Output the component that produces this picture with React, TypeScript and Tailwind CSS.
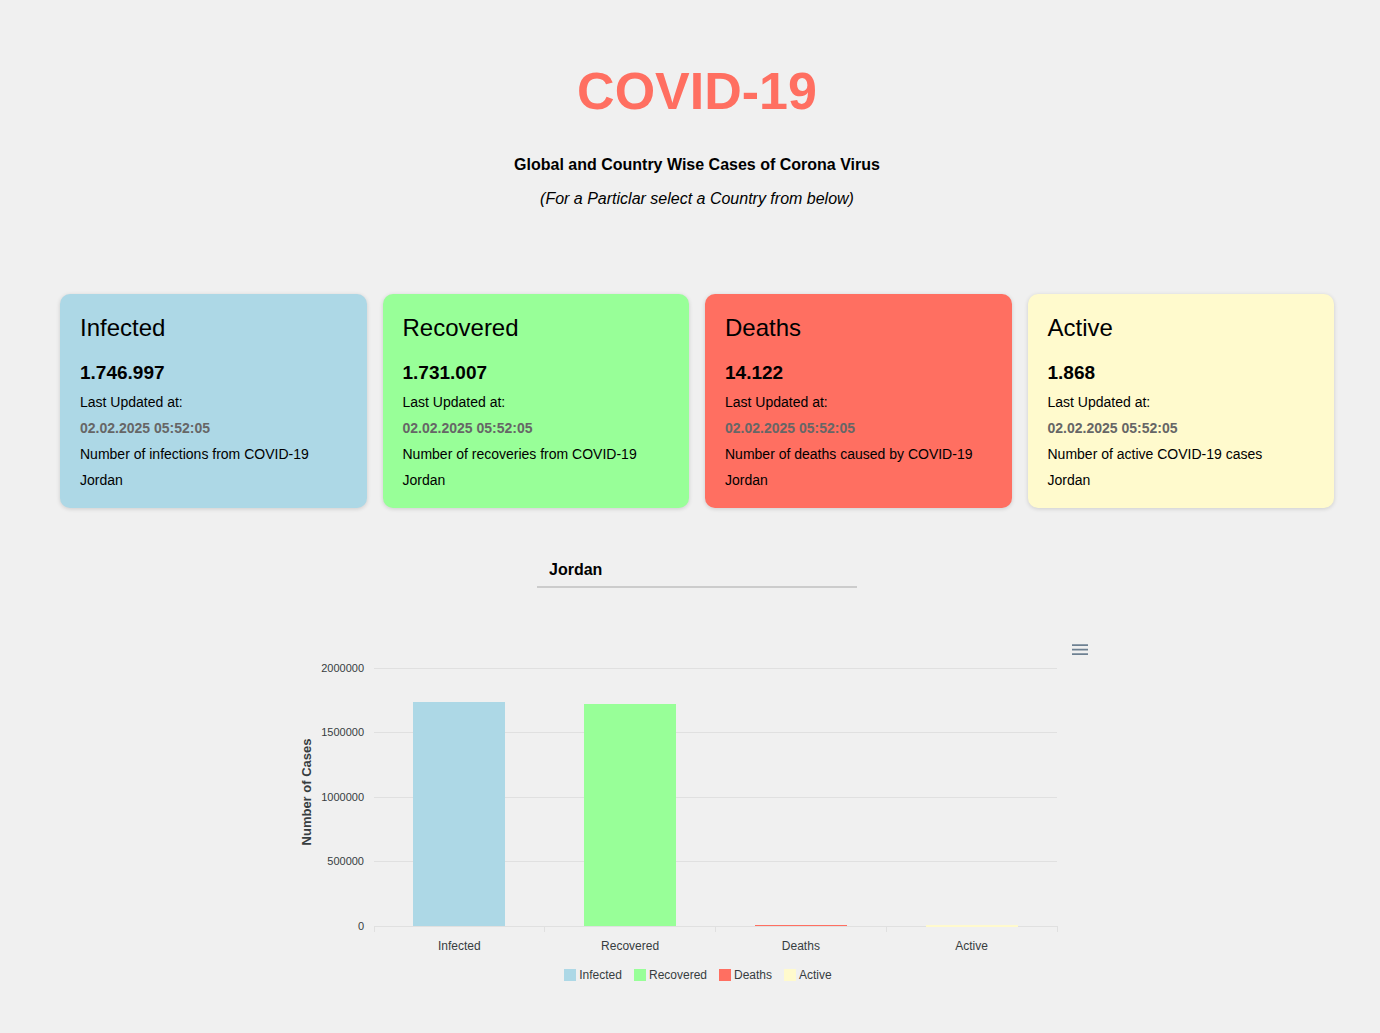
import { useState } from "react";

type Stat = {
  label: string;
  value: number;
  display: string;
  note: string;
  card: string;
  swatch: string;
  color: string;
};

const UPDATED = "02.02.2025 05:52:05";

const STATS: Stat[] = [
  {
    label: "Infected",
    value: 1746997,
    display: "1.746.997",
    note: "Number of infections from COVID-19",
    card: "bg-[#add8e6]",
    swatch: "bg-[#add8e6]",
    color: "#add8e6",
  },
  {
    label: "Recovered",
    value: 1731007,
    display: "1.731.007",
    note: "Number of recoveries from COVID-19",
    card: "bg-[#98ff98]",
    swatch: "bg-[#98ff98]",
    color: "#98ff98",
  },
  {
    label: "Deaths",
    value: 14122,
    display: "14.122",
    note: "Number of deaths caused by COVID-19",
    card: "bg-[#ff6f61]",
    swatch: "bg-[#ff6f61]",
    color: "#ff6f61",
  },
  {
    label: "Active",
    value: 1868,
    display: "1.868",
    note: "Number of active COVID-19 cases",
    card: "bg-[#fffacd]",
    swatch: "bg-[#fffacd]",
    color: "#fffacd",
  },
];

function StatCard({ stat, country }: { stat: Stat; country: string }) {
  return (
    <article
      className={`flex flex-col gap-[10px] rounded-[10px] p-5 text-sm leading-4 shadow-[0_1px_4px_rgba(0,0,0,0.15)] ${stat.card}`}
    >
      <h2 className="mb-[10px] text-2xl leading-7">{stat.label}</h2>
      <p className="text-[19px] leading-[22px] font-bold">{stat.display}</p>
      <p>Last Updated at:</p>
      <p className="font-bold text-[#666]">{UPDATED}</p>
      <p>{stat.note}</p>
      <p>{country}</p>
    </article>
  );
}

const LEFT = 77;
const RIGHT = 760;
const TOP = 32;
const BASE = 290;
const MAX = 2000000;
const TICKS = [2000000, 1500000, 1000000, 500000, 0];
const SLOT = (RIGHT - LEFT) / STATS.length;
const BAR = 92;

function yOf(value: number) {
  return BASE - (value / MAX) * (BASE - TOP);
}

function BarChart() {
  return (
    <svg viewBox="0 0 800 328" className="block w-full" role="img" aria-label="Number of cases by status">
      <text
        transform="translate(14 156) rotate(-90)"
        textAnchor="middle"
        className="fill-[#373d3f] text-[13px] font-bold"
      >
        Number of Cases
      </text>
      {TICKS.map((tick) => (
        <g key={tick}>
          <line x1={LEFT} x2={RIGHT} y1={Math.floor(yOf(tick)) + 0.5} y2={Math.floor(yOf(tick)) + 0.5} stroke="#e0e0e0" />
          <text x={67} y={Math.floor(yOf(tick)) + 4} textAnchor="end" className="fill-[#373d3f] text-[11px]">
            {tick}
          </text>
        </g>
      ))}
      {[0, 1, 2, 3, 4].map((i) => {
        const x = Math.floor(LEFT + SLOT * i) + 0.5;
        return <line key={i} x1={x} x2={x} y1={BASE} y2={BASE + 6} stroke="#e0e0e0" />;
      })}
      {STATS.map((stat, i) => {
        const center = LEFT + SLOT * (i + 0.5);
        const top = Math.min(Math.round(yOf(stat.value)) + 1, BASE - 1);
        return (
          <g key={stat.label}>
            <rect
              x={Math.round(center - BAR / 2)}
              y={top}
              width={BAR}
              height={BASE - top + (stat.label === "Active" ? 1 : 0)}
              fill={stat.color}
            />
            <text x={center} y={BASE + 24} textAnchor="middle" className="fill-[#373d3f] text-xs">
              {stat.label}
            </text>
          </g>
        );
      })}
    </svg>
  );
}

export default function App() {
  const [country, setCountry] = useState("Jordan");

  return (
    <main className="min-h-screen bg-[#f0f0f0] pt-[61px] pr-[46px] pb-10 pl-[60px] font-['Liberation_Sans',Arial,sans-serif] text-black">
      <header className="flex flex-col items-center text-center">
        <h1 className="text-[52px] leading-[60px] font-bold text-[#ff6f61]">COVID-19</h1>
        <p className="mt-8 text-base leading-6 font-bold">Global and Country Wise Cases of Corona Virus</p>
        <p className="mt-[10px] text-base leading-6 italic">(For a Particlar select a Country from below)</p>
      </header>

      <section className="mt-[83px] grid grid-cols-4 gap-4">
        {STATS.map((stat) => (
          <StatCard key={stat.label} stat={stat} country={country} />
        ))}
      </section>

      <div className="mt-[46px] flex justify-center">
        <select
          aria-label="Country"
          value={country}
          onChange={(event) => setCountry(event.target.value)}
          className="h-[34px] w-80 appearance-none border-b-2 border-[#ccc] bg-transparent px-3 text-base font-bold outline-none"
        >
          <option>Global</option>
          <option>Jordan</option>
        </select>
      </div>

      <section className="relative mx-auto mt-12 max-w-[800px]">
        <button type="button" aria-label="Chart menu" className="absolute top-1 right-[7px] size-5 text-[#6e8192]">
          <svg viewBox="0 0 20 20" className="size-5" fill="none" stroke="currentColor" strokeWidth="1.7">
            <path d="M2 5.2h16M2 9.7h16M2 14.2h16" />
          </svg>
        </button>
        <BarChart />
        <ul className="flex justify-center gap-3 pl-[2px] text-xs leading-[22px] text-[#373d3f]">
          {STATS.map((stat) => (
            <li key={stat.label} className="flex items-center gap-[3px]">
              <span className={`size-3 ${stat.swatch}`} />
              {stat.label}
            </li>
          ))}
        </ul>
      </section>
    </main>
  );
}
